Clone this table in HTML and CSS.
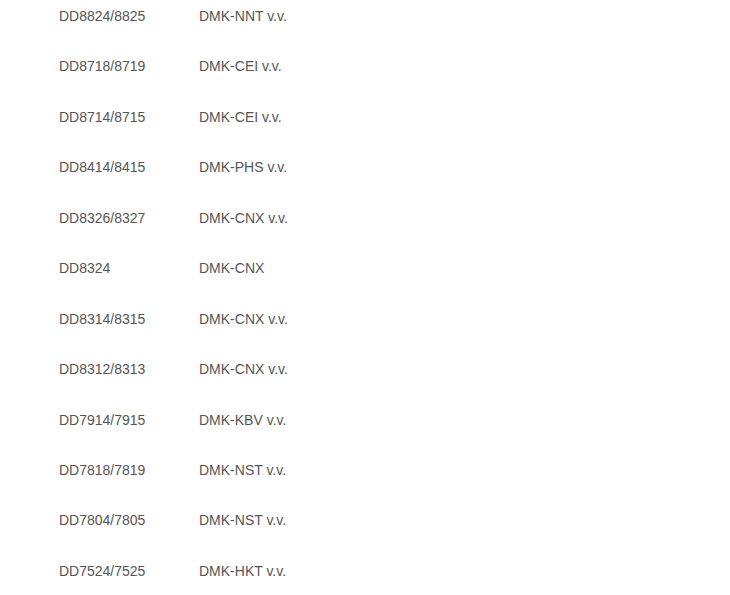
FILE: index.html
```html
<!DOCTYPE html>
<html lang="vi">
<head>
  <meta charset="UTF-8" />
  <title>Danh sach</title>
  <link rel="stylesheet" href="styles.css">
</head>
<body>
  <div class="list">
    <div class="row"><span class="code">DD8824/8825</span><span class="model">DMK-NNT v.v.</span></div>
    <div class="row"><span class="code">DD8718/8719</span><span class="model">DMK-CEI v.v.</span></div>
    <div class="row"><span class="code">DD8714/8715</span><span class="model">DMK-CEI v.v.</span></div>
    <div class="row"><span class="code">DD8414/8415</span><span class="model">DMK-PHS v.v.</span></div>
    <div class="row"><span class="code">DD8326/8327</span><span class="model">DMK-CNX v.v.</span></div>
    <div class="row"><span class="code">DD8324</span><span class="model">DMK-CNX</span></div>
    <div class="row"><span class="code">DD8314/8315</span><span class="model">DMK-CNX v.v.</span></div>
    <div class="row"><span class="code">DD8312/8313</span><span class="model">DMK-CNX v.v.</span></div>
    <div class="row"><span class="code">DD7914/7915</span><span class="model">DMK-KBV v.v.</span></div>
    <div class="row"><span class="code">DD7818/7819</span><span class="model">DMK-NST v.v.</span></div>
    <div class="row"><span class="code">DD7804/7805</span><span class="model">DMK-NST v.v.</span></div>
    <div class="row"><span class="code">DD7524/7525</span><span class="model">DMK-HKT v.v.</span></div>
  </div>
</body>
</html>
```
FILE: styles.css
```css
body {
  margin: 0;
  padding: 0;
  background: #fff;
  font-family: 'Liberation Sans', Arial, sans-serif;
  font-size: 14px;
  color: #555;
}

.list {
  padding: 4px 0 0 59px;
}

.row {
  display: flex;
  height: 25.2px;
  line-height: 25.2px;
  margin-bottom: 25.25px;
}

.code {
  width: 140px;
}
```
